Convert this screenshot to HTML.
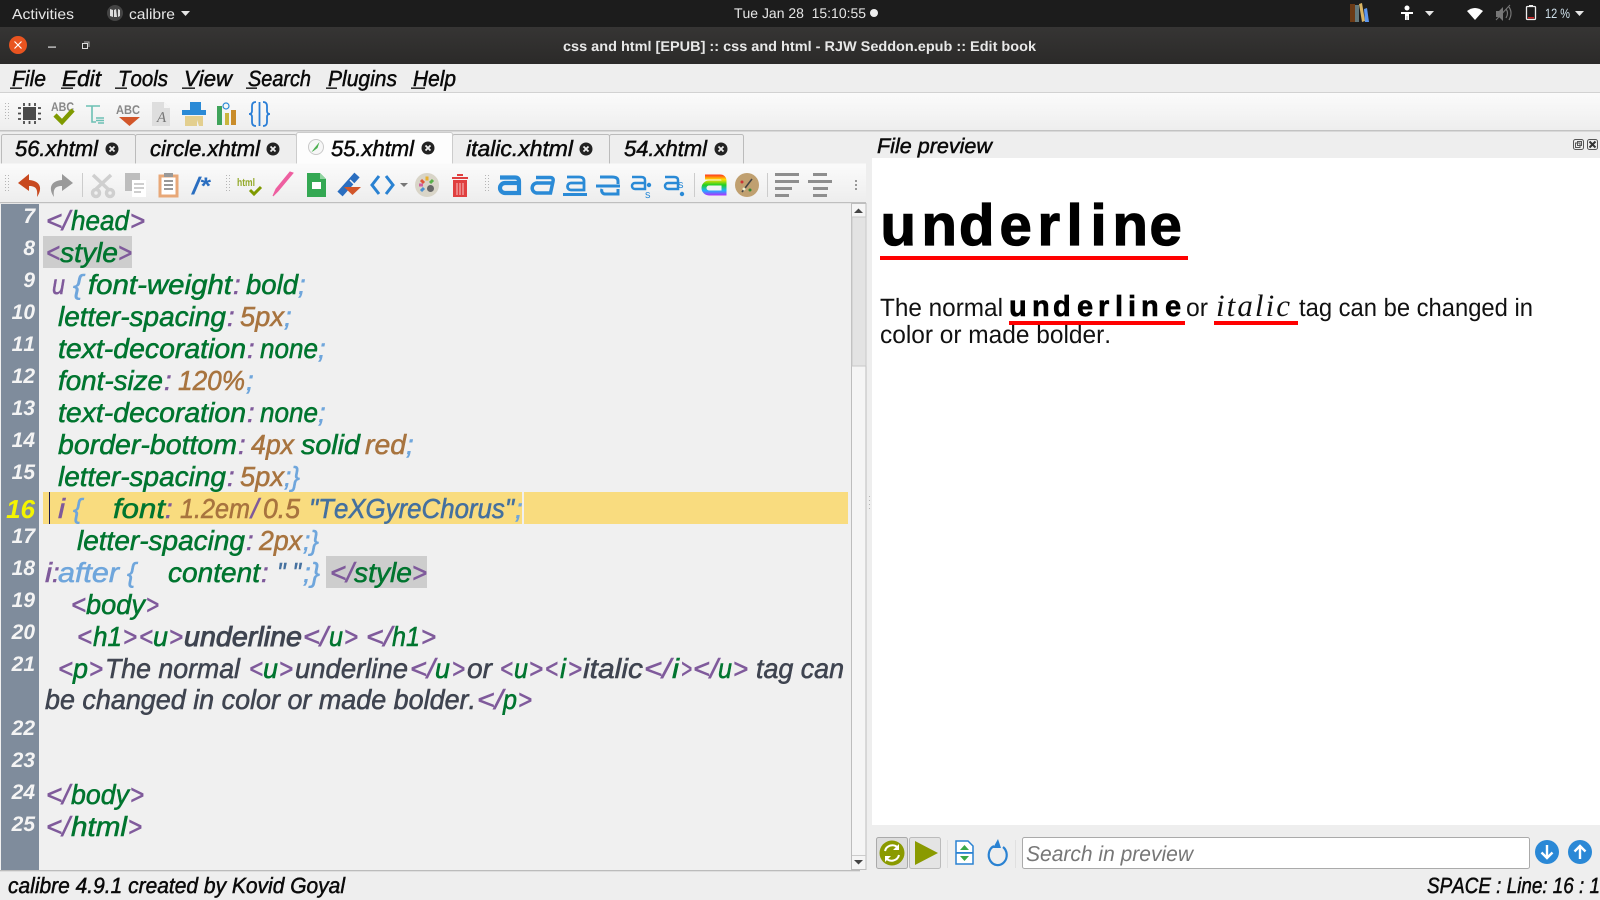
<!DOCTYPE html>
<html><head><meta charset="utf-8"><title>Edit book</title>
<style>
html,body{margin:0;padding:0;width:1600px;height:900px;overflow:hidden;background:#eee}
svg{display:block;position:absolute;left:0;top:0}
text{font-family:"Liberation Sans",sans-serif;text-rendering:geometricPrecision;font-kerning:none;white-space:pre}
.c{font-style:italic;font-size:27.5px;stroke-width:.55px}
.p{fill:#7f5a9b;stroke:#7f5a9b}.g{fill:#00752f;stroke:#00752f}.b{fill:#6fa6dc;stroke:#6fa6dc}
.n{fill:#a8743f;stroke:#a8743f}.d{fill:#3f4450;stroke:#3f4450}.s{fill:#44709f;stroke:#44709f}
.ln{font-style:italic;font-size:21px;fill:#f4f4f4;font-weight:bold;text-anchor:end}
.ui{font-style:italic;font-size:22px;fill:#0a0a0a;stroke:#0a0a0a;stroke-width:.5px}
.pv{font-size:25px;fill:#111}
</style></head><body>
<svg width="1600" height="900" viewBox="0 0 1600 900" xmlns="http://www.w3.org/2000/svg">
<defs>
<linearGradient id="tb" x1="0" y1="0" x2="0" y2="1"><stop offset="0" stop-color="#fbfbfb"/><stop offset="1" stop-color="#eee"/></linearGradient>
<linearGradient id="tt" x1="0" y1="0" x2="0" y2="1"><stop offset="0" stop-color="#363534"/><stop offset="1" stop-color="#2b2a29"/></linearGradient>
<linearGradient id="rb" gradientUnits="userSpaceOnUse" x1="0" y1="174" x2="0" y2="196"><stop offset="0" stop-color="#ff2020"/><stop offset=".25" stop-color="#ffe000"/><stop offset=".5" stop-color="#20d020"/><stop offset=".75" stop-color="#20b0ff"/><stop offset="1" stop-color="#c020ff"/></linearGradient>
<g id="tabx"><circle r="6.5" fill="#222"/><path d="M-2.5-2.5l5 5M2.5-2.5l-5 5" stroke="#eee" stroke-width="1.8"/></g>
<g id="grip" fill="#b5b5b5"><rect x="0" y="0" width="1" height="1"/><rect x="3" y="0" width="1" height="1"/><rect x="0" y="3" width="1" height="1"/><rect x="3" y="3" width="1" height="1"/><rect x="0" y="6" width="1" height="1"/><rect x="3" y="6" width="1" height="1"/><rect x="0" y="9" width="1" height="1"/><rect x="3" y="9" width="1" height="1"/><rect x="0" y="12" width="1" height="1"/><rect x="3" y="12" width="1" height="1"/><rect x="0" y="15" width="1" height="1"/><rect x="3" y="15" width="1" height="1"/></g>
</defs>

<!-- top bar -->
<rect width="1600" height="27" fill="#1c1c1c"/>
<text x="12" y="19" font-size="14.5" fill="#e6e6e6" textLength="62" lengthAdjust="spacingAndGlyphs">Activities</text>
<circle cx="115" cy="13" r="8" fill="#444"/><path d="M110 9l3 1v7l-3-1zM114 10l2-1 1 8-3 0zM118 9l2 1v6l-2 1z" fill="#ddd"/>
<text x="129" y="19" font-size="14.5" fill="#e6e6e6" textLength="46" lengthAdjust="spacingAndGlyphs">calibre</text>
<path d="M181 11h9l-4.500 5z" fill="#e6e6e6"/>
<text x="734" y="18" font-size="14" fill="#e6e6e6" textLength="132" lengthAdjust="spacingAndGlyphs">Tue Jan 28  15:10:55</text>
<circle cx="874" cy="13" r="4" fill="#eee"/>
<!-- tray -->
<rect x="1350" y="4" width="5" height="18" fill="#6b3a16"/><rect x="1355" y="5" width="4" height="17" fill="#64787c"/><path d="M1359 4l3-1 3 18-3 1z" fill="#d9b463"/><path d="M1364 9l3-1 2 14h-4z" fill="#5c97f0"/>
<circle cx="1407" cy="8" r="2.500" fill="#fff"/><path d="M1401 12h12v2h-4v6h-1.800v-4h-.4v4H1405v-6h-4z" fill="#fff"/>
<path d="M1425 11h9l-4.500 5z" fill="#e6e6e6"/>
<path d="M1467 11q8-6 16 0l-8 9z" fill="#fff"/>
<path d="M1496 11h3l4-4v14l-4-4h-3z" fill="#777"/><path d="M1506 9q3 4 0 9M1509 7q4 6 0 13" fill="none" stroke="#777" stroke-width="1.200"/><path d="M1496 20l14-15" stroke="#777" stroke-width="1"/>
<rect x="1526.500" y="6.500" width="9" height="13" rx="1" fill="none" stroke="#eee" stroke-width="1.300"/><rect x="1529" y="5" width="4" height="2" fill="#eee"/><rect x="1528" y="17" width="6" height="1.500" fill="#d02020"/>
<text x="1545" y="18" font-size="13.500" fill="#cfe0ea" textLength="25" lengthAdjust="spacingAndGlyphs">12 %</text>
<path d="M1575 11h9l-4.500 5z" fill="#e6e6e6"/>

<!-- title bar -->
<rect y="27" width="1600" height="37" fill="url(#tt)"/>
<circle cx="18" cy="45" r="9" fill="#e95420"/><path d="M14.500 41.500l7 7M21.500 41.500l-7 7" stroke="#fff" stroke-width="1.200"/>
<rect x="48" y="46.500" width="8" height="1.200" fill="#ddd"/>
<rect x="82.500" y="43.500" width="5" height="5" fill="none" stroke="#ddd"/><path d="M84 42h5v5" fill="none" stroke="#aaa"/>
<text x="563" y="51" font-size="14" font-weight="bold" fill="#e8e8e8" textLength="473" lengthAdjust="spacingAndGlyphs">css and html [EPUB] :: css and html - RJW Seddon.epub :: Edit book</text>

<!-- menu bar -->
<rect y="64" width="1600" height="28" fill="#eee"/><rect y="92" width="1600" height="1" fill="#d2d2d2"/>
<text class="ui" x="12" y="86" textLength="34" lengthAdjust="spacingAndGlyphs">File</text>
<text class="ui" x="62" y="86" textLength="39" lengthAdjust="spacingAndGlyphs">Edit</text>
<text class="ui" x="118" y="86" textLength="50" lengthAdjust="spacingAndGlyphs">Tools</text>
<text class="ui" x="184" y="86" textLength="48" lengthAdjust="spacingAndGlyphs">View</text>
<text class="ui" x="248" y="86" textLength="63" lengthAdjust="spacingAndGlyphs">Search</text>
<text class="ui" x="328" y="86" textLength="69" lengthAdjust="spacingAndGlyphs">Plugins</text>
<text class="ui" x="413" y="86" textLength="43" lengthAdjust="spacingAndGlyphs">Help</text>
<g fill="#000"><rect x="10" y="87.500" width="12" height="1.300"/><rect x="61" y="87.500" width="12" height="1.300"/><rect x="115" y="87.500" width="12" height="1.300"/><rect x="182" y="87.500" width="13" height="1.300"/><rect x="246" y="87.500" width="11" height="1.300"/><rect x="326" y="87.500" width="11" height="1.300"/><rect x="411" y="87.500" width="14" height="1.300"/></g>

<!-- toolbar 1 -->
<rect y="93" width="1600" height="37" fill="url(#tb)"/><rect y="130" width="1600" height="1.500" fill="#c2c2c2"/>
<use href="#grip" x="5" y="103"/>
<rect x="23" y="107" width="13" height="13" fill="#4a4a4a"/>
<path d="M24 103v3M29.500 103v3M35 103v3M24 121v3M29.500 121v3M35 121v3M18 108h3M18 113.500h3M18 119h3M38 108h3M38 113.500h3M38 119h3" stroke="#4a4a4a" stroke-width="1.800"/>
<text x="51" y="111" font-size="12.500" font-weight="bold" fill="#888" textLength="23" lengthAdjust="spacingAndGlyphs">ABC</text>
<path d="M55 115l7 7 11-12" fill="none" stroke="#7f9a00" stroke-width="4.500"/>
<path d="M86 106h14M92 106v16h4M96 118h8M96 120.500h8M98 123h6" fill="none" stroke="#6cc0b4" stroke-width="1.600"/>
<text x="116" y="114" font-size="12.500" font-weight="bold" fill="#888" textLength="24" lengthAdjust="spacingAndGlyphs">ABC</text>
<path d="M119 117h21l-10.500 9z" fill="#d2562a"/>
<path d="M152 102h12l6 6v18h-18z" fill="#dedede"/><path d="M164 102l6 6h-6z" fill="#f5f5f5"/>
<text x="157" y="122" font-size="15" font-style="italic" style="font-family:'Liberation Serif',serif" fill="#777">A</text>
<path d="M190 102h11v8h5v5h-24v-5h8z" fill="#2a8ad6"/><path d="M185 116h18v10h-4l-2-6v6h-12z" fill="#e3cf8f"/>
<rect x="217" y="106" width="5" height="19" fill="#3fa35a"/><rect x="225" y="113" width="4" height="12" fill="#c9b53c"/><rect x="231" y="110" width="5" height="15" fill="#c98c2a"/><circle cx="226" cy="106" r="3" fill="none" stroke="#2a8ad6" stroke-width="1.200"/>
<path d="M256 102q-4 0-4 4v5q0 3-3 3 3 0 3 3v5q0 4 4 4M263 102q4 0 4 4v5q0 3 3 3-3 0-3 3v5q0 4-4 4M259.500 102v24" fill="none" stroke="#2a7ed6" stroke-width="1.800"/>

<!-- tabs row -->
<rect y="131.500" width="866" height="32" fill="#eee"/>
<g fill="#eee" stroke="#bbb"><rect x="1.500" y="134.500" width="134" height="32" rx="2"/><rect x="135.500" y="134.500" width="161" height="32" rx="2"/><rect x="452.500" y="134.500" width="157" height="32" rx="2"/><rect x="609.500" y="134.500" width="134" height="32" rx="2"/></g>
<rect x="296.500" y="132.500" width="156" height="34" rx="2" fill="#fdfdfd" stroke="#ccc"/>
<circle cx="316" cy="147" r="7.500" fill="#f7f7f7" stroke="#c9c9c9"/><path d="M311.500 152l3-4 5-6-2 6-4 3z" fill="#4caf50"/>
<text class="ui" x="15" y="156" textLength="83" lengthAdjust="spacingAndGlyphs">56.xhtml</text><use href="#tabx" x="112" y="149"/>
<text class="ui" x="150" y="156" textLength="110" lengthAdjust="spacingAndGlyphs">circle.xhtml</text><use href="#tabx" x="273" y="149"/>
<text class="ui" x="331" y="156" textLength="83" lengthAdjust="spacingAndGlyphs">55.xhtml</text><use href="#tabx" x="428" y="148"/>
<text class="ui" x="466" y="156" textLength="107" lengthAdjust="spacingAndGlyphs">italic.xhtml</text><use href="#tabx" x="586" y="149"/>
<text class="ui" x="624" y="156" textLength="83" lengthAdjust="spacingAndGlyphs">54.xhtml</text><use href="#tabx" x="721" y="149"/>
<text class="ui" x="877" y="153" font-size="21" style="font-size:21px" textLength="115" lengthAdjust="spacingAndGlyphs">File preview</text>
<g fill="none" stroke="#555" stroke-width="1"><rect x="1573.500" y="139.500" width="10" height="10" rx="2"/><rect x="1575.500" y="143" width="4.500" height="4.500"/><rect x="1577.500" y="141.500" width="4" height="4"/><rect x="1587.500" y="139.500" width="10" height="10" rx="2"/></g><path d="M1589.500 141.500l6 6M1595.500 141.500l-6 6" stroke="#333" stroke-width="2"/>

<!-- toolbar 2 -->
<rect y="163.500" width="866" height="37" fill="url(#tb)"/><rect y="202" width="866" height="1.200" fill="#bfbfbf"/>
<use href="#grip" x="5" y="175"/>
<path d="M29 174l-11 9 11 8v-5c7 0 9 3 8 11 5-7 5-16-8-17z" fill="#c8491f"/>
<path d="M62 174l11 9-11 8v-5c-7 0-9 3-8 11-5-7-5-16 8-17z" fill="#999"/>
<rect x="82" y="173" width="1" height="24" fill="#ccc"/>
<g stroke="#cfcfcf" stroke-width="3.500" fill="none"><path d="M93 175l16 15M111 175l-16 15"/><circle cx="96" cy="193" r="3.500"/><circle cx="110" cy="193" r="3.500"/></g>
<rect x="125" y="173" width="15" height="18" fill="#bdbdbd"/><rect x="132" y="180" width="14" height="17" fill="#fff"/><path d="M134 184h10M134 188h10M134 192h7" stroke="#bdbdbd" stroke-width="1.500"/>
<rect x="160" y="176" width="17" height="20" fill="#fff" stroke="#e8a878" stroke-width="3"/><rect x="164" y="173" width="9" height="4" fill="#999"/><path d="M164 181h9M164 185h9M164 189h9" stroke="#999" stroke-width="2"/>
<text x="192" y="194" font-size="24" font-weight="bold" font-style="italic" fill="#2a6ec0" textLength="18" lengthAdjust="spacingAndGlyphs">/*</text>
<use href="#grip" x="226" y="175"/>
<text x="237" y="186" font-size="11" font-weight="bold" fill="#93a92a" textLength="18" lengthAdjust="spacingAndGlyphs">html</text>
<path d="M250 190l4 4 7-7" fill="none" stroke="#7f9a00" stroke-width="3"/>
<path d="M293 173l-15 18-5 5 3-7 14-17z" fill="#ee5fa0" stroke="#ee5fa0"/>
<path d="M307 173h13l6 6v18h-19z" fill="#34a853"/><path d="M320 173l6 6h-6z" fill="#8fd4a0"/><rect x="312" y="182" width="9" height="7" fill="#fff"/>
<path d="M340 194l17-19" stroke="#2a6ec0" stroke-width="7" fill="none"/><path d="M350 180l5 5" stroke="#f4f4f4" stroke-width="1.500"/><path d="M344 187h17l-8.500 8z" fill="#d2562a"/>
<path d="M379 176l-7 9 7 9M386 176l7 9-7 9" fill="none" stroke="#2a82d2" stroke-width="3"/>
<path d="M400 183h8l-4 4z" fill="#777"/>
<circle cx="427" cy="185" r="12" fill="#d9d5c8"/>
<g fill="none" stroke-width="3"><path d="M421 180l3 3" stroke="#e0563a"/><path d="M427 176.500v4" stroke="#e8b030"/><path d="M433 180l-3 3" stroke="#5ab04a"/><path d="M419 185h4" stroke="#d060a0"/><path d="M421 191l3-3" stroke="#4a90d0"/></g><circle cx="430.500" cy="188.500" r="3.500" fill="#666"/>
<path d="M452 177h16v2h-16zM457 174h6v2h-6z" fill="#e04040"/><path d="M453 180h14v17h-14z" fill="#e04040"/><path d="M457 183v12M460 183v12M463 183v12" stroke="#f5b0b0" stroke-width="1.200"/>
<use href="#grip" x="485" y="175"/>
<path d="M500 177.500h15q4 0 4 4v11.500h-14a5 5 0 0 1 0-10h14" fill="none" stroke="#2a8ad6" stroke-width="4.200"/>
<path d="M536 177.500h14q4 0 3 4l-2.500 11.500h-14a5 5 0 0 1 1.500-10h14" fill="none" stroke="#2a8ad6" stroke-width="3.500"/>
<path d="M567 177h12q5 0 5 4v9h-13a3.500 3.500 0 0 1 0-7h13" fill="none" stroke="#2a8ad6" stroke-width="2.800"/><rect x="563" y="193" width="24" height="3" fill="#2a8ad6"/>
<path d="M600 177h12q6 0 6 4v3" fill="none" stroke="#2a8ad6" stroke-width="3"/><path d="M618 189v5h-13a3.500 3.500 0 0 1-3-5" fill="none" stroke="#2a8ad6" stroke-width="3"/><rect x="596" y="184.500" width="24" height="3" fill="#2a8ad6"/>
<path d="M632 177h9q4 0 4 3v9h-10a3 3 0 0 1 0-6h10" fill="none" stroke="#2a8ad6" stroke-width="2.500"/><circle cx="649" cy="185" r="2.200" fill="#2a8ad6"/>
<text x="645" y="198" font-size="11" fill="#2a8ad6">s</text>
<path d="M665 177h9q4 0 4 3v9h-10a3 3 0 0 1 0-6h10" fill="none" stroke="#2a8ad6" stroke-width="2.500"/><circle cx="682" cy="194" r="2.200" fill="#2a8ad6"/>
<text x="678" y="188" font-size="11" fill="#2a8ad6">s</text>
<rect x="694" y="173" width="1" height="24" fill="#ccc"/>
<path d="M705 177h15q4 0 4 4v12h-15a5 5 0 0 1 0-10h15" fill="none" stroke="url(#rb)" stroke-width="5"/>
<circle cx="747" cy="185" r="12" fill="#c0a070"/><path d="M742 192l10-13" stroke="#444" stroke-width="1.600"/><circle cx="742" cy="182" r="1.500" fill="#c33"/><circle cx="750" cy="190" r="1.500" fill="#383"/><circle cx="744" cy="189" r="1.500" fill="#eec"/>
<rect x="767" y="173" width="1" height="24" fill="#ccc"/>
<g fill="#8e8e8e"><rect x="775" y="173" width="24" height="3"/><rect x="775" y="180" width="24" height="3"/><rect x="775" y="187" width="17" height="3"/><rect x="775" y="194" width="14" height="3"/><rect x="813" y="173" width="14" height="3"/><rect x="808" y="180" width="24" height="3"/><rect x="813" y="187" width="15" height="3"/><rect x="813" y="194" width="14" height="3"/></g>
<g fill="#999"><rect x="855" y="180" width="2" height="2"/><rect x="855" y="184" width="2" height="2"/><rect x="855" y="188" width="2" height="2"/></g>

<!-- editor -->
<rect x="0" y="203.500" width="851" height="666.500" fill="#f0f0f0"/>
<rect x="1" y="204" width="38" height="666" fill="#7f8c9c"/>
<rect x="43" y="236" width="89" height="32" fill="#cdcdcd"/>
<rect x="43" y="492" width="479" height="32" fill="#f9dc7f"/><rect x="524" y="492" width="324" height="32" fill="#f9dc7f"/>
<rect x="49" y="492" width="1" height="32" fill="#1a1a50"/>
<rect x="326" y="556" width="101" height="32" fill="#cdcdcd"/>

<!-- scrollbar -->
<rect x="851.500" y="203.500" width="14.500" height="666" fill="#f5f5f5" stroke="#bdbdbd"/>
<rect x="852" y="217" width="14" height="149" fill="#e3e3e3" stroke="#c8c8c8"/>
<path d="M854 213h9l-4.500-4.500z" fill="#444"/><path d="M854 860h9l-4.500 4.500z" fill="#444"/>
<rect x="852" y="855" width="14" height="1" fill="#ccc"/>
<g fill="#b5b5b5"><rect x="869" y="496" width="1" height="1"/><rect x="869" y="500" width="1" height="1"/><rect x="869" y="504" width="1" height="1"/><rect x="869" y="508" width="1" height="1"/></g>

<!-- line numbers -->
<text class="ln" x="35" y="223">7</text><text class="ln" x="35" y="255">8</text><text class="ln" x="35" y="287">9</text><text class="ln" x="35" y="319">10</text><text class="ln" x="35" y="351">11</text><text class="ln" x="35" y="383">12</text><text class="ln" x="35" y="415">13</text><text class="ln" x="35" y="447">14</text><text class="ln" x="35" y="479">15</text>
<text class="ln" x="35" y="518" style="font-size:26px;fill:#f5f500">16</text>
<text class="ln" x="35" y="543">17</text><text class="ln" x="35" y="575">18</text><text class="ln" x="35" y="607">19</text><text class="ln" x="35" y="639">20</text><text class="ln" x="35" y="671">21</text><text class="ln" x="35" y="735">22</text><text class="ln" x="35" y="767">23</text><text class="ln" x="35" y="799">24</text><text class="ln" x="35" y="831">25</text>

<!-- code -->
<g transform="translate(0,.8)">
<text class="c p" x="46" y="229" textLength="24" lengthAdjust="spacingAndGlyphs">&lt;/</text><text class="c g" x="71" y="229" textLength="58" lengthAdjust="spacingAndGlyphs">head</text><text class="c p" x="130" y="229" textLength="15" lengthAdjust="spacingAndGlyphs">&gt;</text>
<text class="c p" x="46" y="261" textLength="14" lengthAdjust="spacingAndGlyphs">&lt;</text><text class="c g" x="60" y="261" textLength="58" lengthAdjust="spacingAndGlyphs">style</text><text class="c p" x="118" y="261" textLength="14" lengthAdjust="spacingAndGlyphs">&gt;</text>
<text class="c p" x="52" y="293" textLength="13" lengthAdjust="spacingAndGlyphs">u</text><text class="c b" x="73" y="293" textLength="10" lengthAdjust="spacingAndGlyphs">{</text><text class="c g" x="88" y="293" textLength="144" lengthAdjust="spacingAndGlyphs">font-weight</text><text class="c p" x="233" y="293">:</text><text class="c g" x="246" y="293" textLength="52" lengthAdjust="spacingAndGlyphs">bold</text><text class="c b" x="298" y="293">;</text>
<text class="c g" x="58" y="325" textLength="168" lengthAdjust="spacingAndGlyphs">letter-spacing</text><text class="c p" x="227" y="325">:</text><text class="c n" x="240" y="325" textLength="44" lengthAdjust="spacingAndGlyphs">5px</text><text class="c b" x="284" y="325">;</text>
<text class="c g" x="58" y="357" textLength="188" lengthAdjust="spacingAndGlyphs">text-decoration</text><text class="c p" x="247" y="357">:</text><text class="c g" x="260" y="357" textLength="58" lengthAdjust="spacingAndGlyphs">none</text><text class="c b" x="318" y="357">;</text>
<text class="c g" x="58" y="389" textLength="105" lengthAdjust="spacingAndGlyphs">font-size</text><text class="c p" x="164" y="389">:</text><text class="c n" x="178" y="389" textLength="67" lengthAdjust="spacingAndGlyphs">120%</text><text class="c b" x="246" y="389">;</text>
<text class="c g" x="58" y="421" textLength="188" lengthAdjust="spacingAndGlyphs">text-decoration</text><text class="c p" x="247" y="421">:</text><text class="c g" x="260" y="421" textLength="58" lengthAdjust="spacingAndGlyphs">none</text><text class="c b" x="318" y="421">;</text>
<text class="c g" x="58" y="453" textLength="179" lengthAdjust="spacingAndGlyphs">border-bottom</text><text class="c p" x="238" y="453">:</text><text class="c n" x="251" y="453" textLength="43" lengthAdjust="spacingAndGlyphs">4px</text><text class="c g" x="301" y="453" textLength="59" lengthAdjust="spacingAndGlyphs">solid</text><text class="c n" x="365" y="453" textLength="41" lengthAdjust="spacingAndGlyphs">red</text><text class="c b" x="406" y="453">;</text>
<text class="c g" x="58" y="485" textLength="168" lengthAdjust="spacingAndGlyphs">letter-spacing</text><text class="c p" x="227" y="485">:</text><text class="c n" x="240" y="485" textLength="44" lengthAdjust="spacingAndGlyphs">5px</text><text class="c b" x="284" y="485" textLength="16" lengthAdjust="spacingAndGlyphs">;}</text>
<text class="c p" x="58" y="517" textLength="7" lengthAdjust="spacingAndGlyphs">i</text><text class="c b" x="73" y="517" textLength="9" lengthAdjust="spacingAndGlyphs">{</text><text class="c g" x="113" y="517" textLength="52" lengthAdjust="spacingAndGlyphs">font</text><text class="c p" x="165" y="517">:</text><text class="c n" x="180" y="517" textLength="70" lengthAdjust="spacingAndGlyphs">1.2em</text><text class="c p" x="251" y="517">/</text><text class="c n" x="263" y="517" textLength="37" lengthAdjust="spacingAndGlyphs">0.5</text><text class="c s" x="309" y="517" textLength="205" lengthAdjust="spacingAndGlyphs">"TeXGyreChorus"</text><text class="c b" x="515" y="517">;</text>
<text class="c g" x="77" y="549" textLength="168" lengthAdjust="spacingAndGlyphs">letter-spacing</text><text class="c p" x="246" y="549">:</text><text class="c n" x="259" y="549" textLength="43" lengthAdjust="spacingAndGlyphs">2px</text><text class="c b" x="303" y="549" textLength="16" lengthAdjust="spacingAndGlyphs">;}</text>
<text class="c p" x="45" y="581" textLength="7" lengthAdjust="spacingAndGlyphs">i</text><text class="c p" x="52" y="581">:</text><text class="c b" x="58" y="581" textLength="61" lengthAdjust="spacingAndGlyphs">after</text><text class="c b" x="127" y="581" textLength="9" lengthAdjust="spacingAndGlyphs">{</text><text class="c g" x="168" y="581" textLength="92" lengthAdjust="spacingAndGlyphs">content</text><text class="c p" x="261" y="581">:</text><text class="c s" x="277" y="581" textLength="24" lengthAdjust="spacingAndGlyphs">" "</text><text class="c b" x="303" y="581" textLength="17" lengthAdjust="spacingAndGlyphs">;}</text><text class="c p" x="330" y="581" textLength="24" lengthAdjust="spacingAndGlyphs">&lt;/</text><text class="c g" x="354" y="581" textLength="58" lengthAdjust="spacingAndGlyphs">style</text><text class="c p" x="412" y="581" textLength="15" lengthAdjust="spacingAndGlyphs">&gt;</text>
<text class="c p" x="71" y="613" textLength="15" lengthAdjust="spacingAndGlyphs">&lt;</text><text class="c g" x="86" y="613" textLength="59" lengthAdjust="spacingAndGlyphs">body</text><text class="c p" x="146" y="613" textLength="13" lengthAdjust="spacingAndGlyphs">&gt;</text>
<text class="c p" x="77" y="645" textLength="15" lengthAdjust="spacingAndGlyphs">&lt;</text><text class="c g" x="93" y="645" textLength="29" lengthAdjust="spacingAndGlyphs">h1</text><text class="c p" x="123" y="645" textLength="14" lengthAdjust="spacingAndGlyphs">&gt;</text><text class="c p" x="139" y="645" textLength="14" lengthAdjust="spacingAndGlyphs">&lt;</text><text class="c g" x="153" y="645" textLength="15" lengthAdjust="spacingAndGlyphs">u</text><text class="c p" x="169" y="645" textLength="14" lengthAdjust="spacingAndGlyphs">&gt;</text><text class="c d" x="184" y="645" textLength="118" lengthAdjust="spacingAndGlyphs" style="stroke-width:.9px">underline</text><text class="c p" x="303" y="645" textLength="25" lengthAdjust="spacingAndGlyphs">&lt;/</text><text class="c g" x="329" y="645" textLength="14" lengthAdjust="spacingAndGlyphs">u</text><text class="c p" x="344" y="645" textLength="14" lengthAdjust="spacingAndGlyphs">&gt;</text><text class="c p" x="366" y="645" textLength="26" lengthAdjust="spacingAndGlyphs">&lt;/</text><text class="c g" x="392" y="645" textLength="28" lengthAdjust="spacingAndGlyphs">h1</text><text class="c p" x="421" y="645" textLength="15" lengthAdjust="spacingAndGlyphs">&gt;</text>
<text class="c p" x="58" y="677" textLength="15" lengthAdjust="spacingAndGlyphs">&lt;</text><text class="c g" x="73" y="677" textLength="15" lengthAdjust="spacingAndGlyphs">p</text><text class="c p" x="89" y="677" textLength="14" lengthAdjust="spacingAndGlyphs">&gt;</text><text class="c d" x="105" y="677" textLength="135" lengthAdjust="spacingAndGlyphs">The normal</text><text class="c p" x="249" y="677" textLength="14" lengthAdjust="spacingAndGlyphs">&lt;</text><text class="c g" x="263" y="677" textLength="15" lengthAdjust="spacingAndGlyphs">u</text><text class="c p" x="279" y="677" textLength="14" lengthAdjust="spacingAndGlyphs">&gt;</text><text class="c d" x="295" y="677" textLength="113" lengthAdjust="spacingAndGlyphs">underline</text><text class="c p" x="410" y="677" textLength="25" lengthAdjust="spacingAndGlyphs">&lt;/</text><text class="c g" x="435" y="677" textLength="15" lengthAdjust="spacingAndGlyphs">u</text><text class="c p" x="452" y="677" textLength="13" lengthAdjust="spacingAndGlyphs">&gt;</text><text class="c d" x="467" y="677" textLength="25" lengthAdjust="spacingAndGlyphs">or</text><text class="c p" x="500" y="677" textLength="13" lengthAdjust="spacingAndGlyphs">&lt;</text><text class="c g" x="514" y="677" textLength="14" lengthAdjust="spacingAndGlyphs">u</text><text class="c p" x="529" y="677" textLength="14" lengthAdjust="spacingAndGlyphs">&gt;</text><text class="c p" x="545" y="677" textLength="13" lengthAdjust="spacingAndGlyphs">&lt;</text><text class="c g" x="560" y="677" textLength="6" lengthAdjust="spacingAndGlyphs">i</text><text class="c p" x="568" y="677" textLength="14" lengthAdjust="spacingAndGlyphs">&gt;</text><text class="c d" x="583" y="677" textLength="60" lengthAdjust="spacingAndGlyphs">italic</text><text class="c p" x="644" y="677" textLength="27" lengthAdjust="spacingAndGlyphs">&lt;/</text><text class="c g" x="672" y="677" textLength="7" lengthAdjust="spacingAndGlyphs">i</text><text class="c p" x="681" y="677" textLength="11" lengthAdjust="spacingAndGlyphs">&gt;</text><text class="c p" x="693" y="677" textLength="25" lengthAdjust="spacingAndGlyphs">&lt;/</text><text class="c g" x="718" y="677" textLength="14" lengthAdjust="spacingAndGlyphs">u</text><text class="c p" x="733" y="677" textLength="15" lengthAdjust="spacingAndGlyphs">&gt;</text><text class="c d" x="756" y="677" textLength="88" lengthAdjust="spacingAndGlyphs">tag can</text>
<text class="c d" x="45" y="708" textLength="431" lengthAdjust="spacingAndGlyphs">be changed in color or made bolder.</text><text class="c p" x="477" y="708" textLength="26" lengthAdjust="spacingAndGlyphs">&lt;/</text><text class="c g" x="503" y="708" textLength="14" lengthAdjust="spacingAndGlyphs">p</text><text class="c p" x="518" y="708" textLength="14" lengthAdjust="spacingAndGlyphs">&gt;</text>
<text class="c p" x="46" y="803" textLength="24" lengthAdjust="spacingAndGlyphs">&lt;/</text><text class="c g" x="71" y="803" textLength="58" lengthAdjust="spacingAndGlyphs">body</text><text class="c p" x="130" y="803" textLength="14" lengthAdjust="spacingAndGlyphs">&gt;</text>
<text class="c p" x="46" y="835" textLength="24" lengthAdjust="spacingAndGlyphs">&lt;/</text><text class="c g" x="71" y="835" textLength="56" lengthAdjust="spacingAndGlyphs">html</text><text class="c p" x="128" y="835" textLength="14" lengthAdjust="spacingAndGlyphs">&gt;</text>
</g>

<!-- preview -->
<rect x="872" y="158" width="728" height="667" fill="#fff"/>
<text x="880.500 921.500 959 999.500 1037.500 1066.500 1090.500 1112.500 1149.500" y="245" font-size="58" font-weight="bold" fill="#000" stroke="#000" stroke-width="1.200">underline</text>
<rect x="880" y="256" width="308" height="4" fill="#f00"/>
<text class="pv" x="880" y="316" textLength="123" lengthAdjust="spacingAndGlyphs">The normal</text>
<text x="1009 1032 1053 1077 1098 1115 1128 1141 1165" y="316" font-size="29" font-weight="bold" fill="#000" stroke="#000" stroke-width=".6">underline</text>
<rect x="1009" y="321" width="176" height="4" fill="#f00"/>
<text class="pv" x="1186" y="316" textLength="22" lengthAdjust="spacingAndGlyphs">or</text>
<text x="1216" y="316" font-size="31" font-style="italic" fill="#111" style="font-family:'Liberation Serif',serif" textLength="74" lengthAdjust="spacing">italic</text>
<rect x="1214" y="321" width="84" height="4" fill="#f00"/>
<text class="pv" x="1299" y="316" textLength="234" lengthAdjust="spacingAndGlyphs">tag can be changed in</text>
<text class="pv" x="880" y="343" textLength="231" lengthAdjust="spacingAndGlyphs">color or made bolder.</text>

<!-- preview controls -->
<rect x="876.500" y="837.500" width="31" height="31" rx="2" fill="#ddd" stroke="#aaa"/><rect x="909.500" y="837.500" width="31" height="31" rx="2" fill="#e4e4e4" stroke="#bbb"/>
<circle cx="892" cy="853" r="12.500" fill="#8a9a00"/><path d="M885 851a7.500 7.500 0 0 1 13-3M899 855a7.500 7.500 0 0 1-13 3" fill="none" stroke="#fff" stroke-width="2"/><path d="M899 844v6h-6zM885 862v-6h6z" fill="#fff"/>
<path d="M915 841l23 12-23 12z" fill="#8a9a00"/>
<rect x="947" y="840" width="1" height="28" fill="#e0e0e0"/>
<path d="M956 841h12l5 5v18h-17z" fill="#fff" stroke="#2a82d2" stroke-width="1.500"/><rect x="956" y="852" width="17" height="1.800" fill="#2a82d2"/><path d="M960 850l4.500-5 4.500 5zM960 856h9l-4.500 5z" fill="#3aa84a"/>
<path d="M994 846a9 10 0 1 0 9 1" fill="none" stroke="#2a82d2" stroke-width="2.200"/><path d="M998 839l3 9-8 0z" fill="#2a82d2"/>
<rect x="1015" y="840" width="1" height="28" fill="#e0e0e0"/>
<rect x="1022.500" y="837.500" width="507" height="31" rx="2" fill="#fff" stroke="#aaa"/>
<text x="1026" y="861" font-size="21.500" font-style="italic" fill="#777" textLength="167" lengthAdjust="spacingAndGlyphs">Search in preview</text>
<circle cx="1547" cy="852" r="12" fill="#2a88d6"/><path d="M1547 845v13M1541.500 852.500l5.500 5.500 5.500-5.500" fill="none" stroke="#fff" stroke-width="2.400"/>
<circle cx="1580" cy="852" r="12" fill="#2a88d6"/><path d="M1580 859v-13M1574.500 851.500l5.500-5.500 5.500 5.500" fill="none" stroke="#fff" stroke-width="2.400"/>

<!-- status bar -->
<rect y="870" width="860" height="1.300" fill="#bbb"/>
<text class="ui" x="8" y="893" textLength="337" lengthAdjust="spacingAndGlyphs">calibre 4.9.1 created by Kovid Goyal</text>
<text class="ui" x="1427" y="893" textLength="173" lengthAdjust="spacingAndGlyphs">SPACE : Line: 16 : 1</text>
</svg>
</body></html>
